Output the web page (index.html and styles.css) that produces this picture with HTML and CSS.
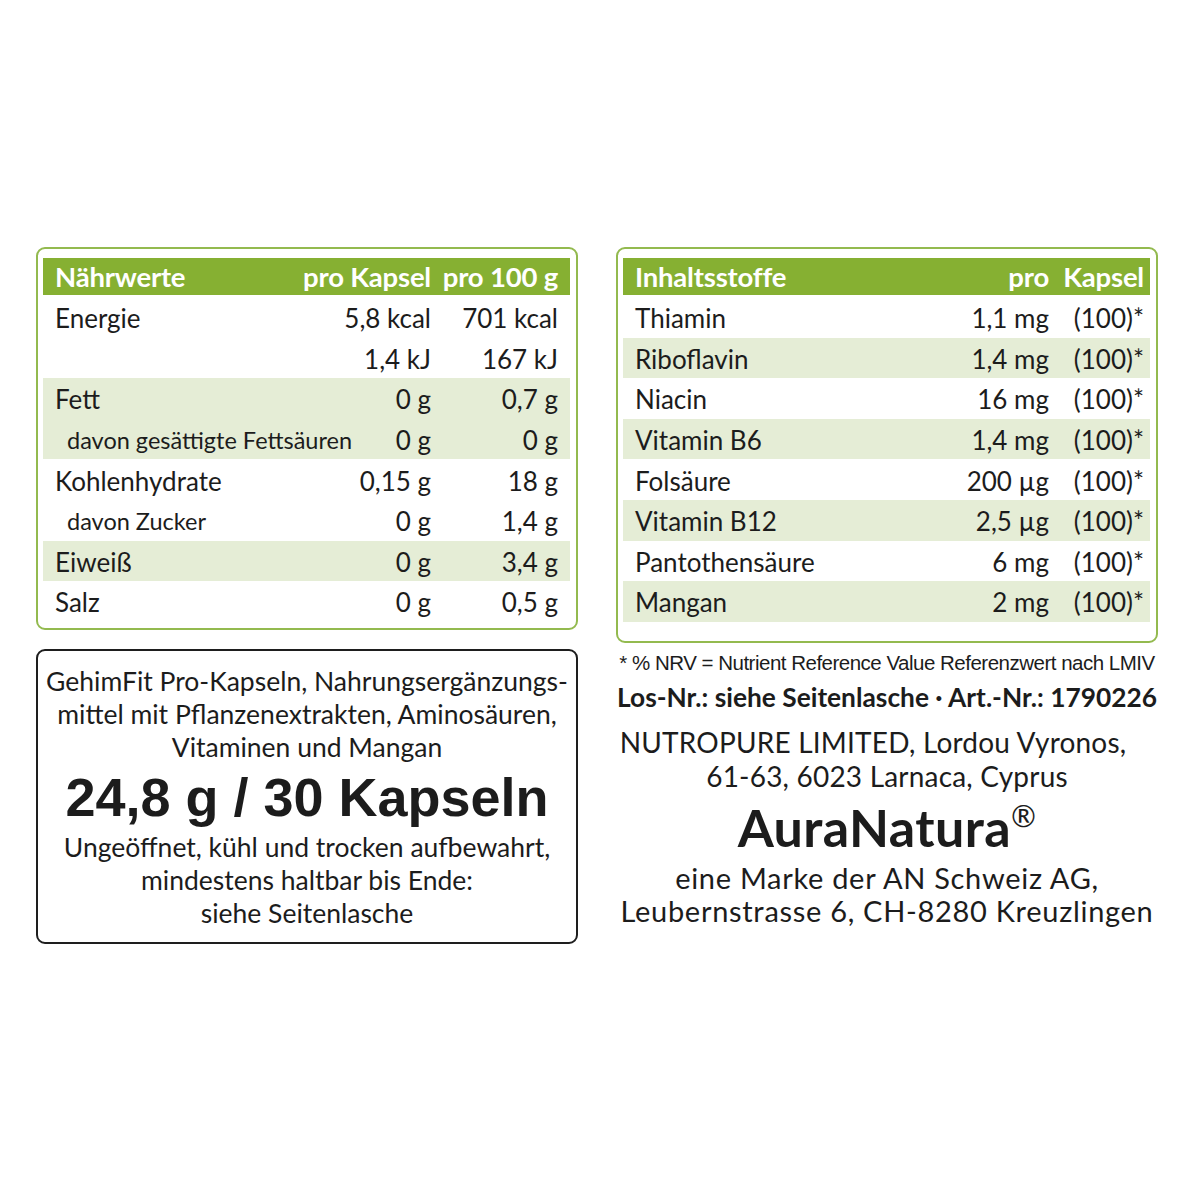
FILE: index.html
```html
<!DOCTYPE html>
<html lang="de">
<head>
<meta charset="utf-8">
<title>Nährwerte</title>
<link rel="stylesheet" href="styles.css">
</head>
<body>
<div class="page">
  <div class="col col-left">
    <div class="gbox nutri">
      <div class="row head">
        <span class="c1">Nährwerte</span><span class="c2">pro Kapsel</span><span class="c3">pro 100 g</span>
      </div>
      <div class="row"><span class="c1">Energie</span><span class="c2">5,8 kcal</span><span class="c3">701 kcal</span></div>
      <div class="row"><span class="c1"></span><span class="c2">1,4 kJ</span><span class="c3">167 kJ</span></div>
      <div class="row shade"><span class="c1">Fett</span><span class="c2">0 g</span><span class="c3">0,7 g</span></div>
      <div class="row shade"><span class="c1 sub">davon gesättigte Fettsäuren</span><span class="c2">0 g</span><span class="c3">0 g</span></div>
      <div class="row"><span class="c1">Kohlenhydrate</span><span class="c2">0,15 g</span><span class="c3">18 g</span></div>
      <div class="row"><span class="c1 sub">davon Zucker</span><span class="c2">0 g</span><span class="c3">1,4 g</span></div>
      <div class="row shade"><span class="c1">Eiweiß</span><span class="c2">0 g</span><span class="c3">3,4 g</span></div>
      <div class="row"><span class="c1">Salz</span><span class="c2">0 g</span><span class="c3">0,5 g</span></div>
    </div>
    <div class="bbox">
      <p class="desc">GehimFit Pro-Kapseln, Nahrungsergänzungs-<br>mittel mit Pflanzenextrakten, Aminosäuren,<br>Vitaminen und Mangan</p>
      <p class="weight">24,8 g / 30 Kapseln</p>
      <p class="desc">Ungeöffnet, kühl und trocken aufbewahrt,<br>mindestens haltbar bis Ende:<br>siehe Seitenlasche</p>
    </div>
  </div>
  <div class="col col-right">
    <div class="gbox ingr">
      <div class="row head">
        <span class="c1">Inhaltsstoffe</span><span class="c2">pro</span><span class="c3">Kapsel</span>
      </div>
      <div class="row"><span class="c1">Thiamin</span><span class="c2">1,1 mg</span><span class="c3">(100)*</span></div>
      <div class="row shade"><span class="c1">Riboflavin</span><span class="c2">1,4 mg</span><span class="c3">(100)*</span></div>
      <div class="row"><span class="c1">Niacin</span><span class="c2">16 mg</span><span class="c3">(100)*</span></div>
      <div class="row shade"><span class="c1">Vitamin B6</span><span class="c2">1,4 mg</span><span class="c3">(100)*</span></div>
      <div class="row"><span class="c1">Folsäure</span><span class="c2">200 µg</span><span class="c3">(100)*</span></div>
      <div class="row shade"><span class="c1">Vitamin B12</span><span class="c2">2,5 µg</span><span class="c3">(100)*</span></div>
      <div class="row"><span class="c1">Pantothensäure</span><span class="c2">6 mg</span><span class="c3">(100)*</span></div>
      <div class="row shade"><span class="c1">Mangan</span><span class="c2">2 mg</span><span class="c3">(100)*</span></div>
    </div>
    <p class="nrv">* % NRV = Nutrient Reference Value Referenzwert nach LMIV</p>
    <p class="los">Los-Nr.: siehe Seitenlasche · Art.-Nr.: 1790226</p>
    <p class="addr"><span class="trail">NUTROPURE LIMITED, Lordou Vyronos,</span><br>61-63, 6023 Larnaca, Cyprus</p>
    <p class="brand">AuraNatura<sup>®</sup></p>
    <p class="addr addr2">eine Marke der AN Schweiz AG,<br>Leubernstrasse 6, CH-8280 Kreuzlingen</p>
  </div>
</div>
</body>
</html>
```
FILE: styles.css
```css
html, body {
  margin: 0;
  padding: 0;
  background: #ffffff;
}
body {
  font-family: "Lato", "Liberation Sans", sans-serif;
  color: #1c1c1c;
}
.page {
  display: flex;
  gap: 38px;
  padding: 247px 0 0 36px;
}
.col {
  width: 542px;
  display: flex;
  flex-direction: column;
}
.gbox {
  border: 2px solid #93ba4f;
  border-radius: 9px;
  padding: 9px 6px 6px 5px;
}
.ingr {
  padding-bottom: 19px;
}
.row {
  display: grid;
  align-items: center;
  height: 40.6px;
  font-size: 26px;
  padding-top: 2px !important;
  box-sizing: border-box;
}
.nutri .row {
  grid-template-columns: minmax(0, 1fr) 140px 127px;
  padding: 0 12px 0 12px;
}
.ingr .row {
  grid-template-columns: minmax(0, 1fr) 150px 95px;
  padding: 0 6px 0 12px;
}
.row .c2, .row .c3 {
  text-align: right;
  white-space: nowrap;
}
.row .c1 { white-space: nowrap; }
.row .sub {
  font-size: 23.5px;
  padding-left: 12px;
}
.row.head {
  background: #86b032;
  color: #ffffff;
  font-weight: 700;
  height: 37px;
  font-size: 27.5px;
  letter-spacing: -0.2px;
  margin-bottom: 2px;
  padding-top: 0 !important;
}
.row.shade {
  background: #e5edd6;
}
.bbox {
  margin-top: 19px;
  border: 2px solid #1e1e1e;
  border-radius: 9px;
  height: 295px;
  box-sizing: border-box;
  text-align: center;
  padding-top: 14px;
}
.bbox p { margin: 0; }
.desc {
  font-size: 26.5px;
  line-height: 33px;
}
.weight {
  font-family: "Liberation Sans", Arial, sans-serif;
  font-weight: 700;
  font-size: 54px;
  line-height: 67px;
}
.col-right p { margin: 0; text-align: center; white-space: nowrap; }
.nrv {
  font-family: "Liberation Sans", Arial, sans-serif;
  font-size: 20.5px;
  letter-spacing: -0.5px;
  margin-top: 8px !important;
  line-height: 24px;
}
.los {
  font-weight: 700;
  font-size: 26.3px;
  line-height: 32px;
  margin-top: 6px !important;
}
.addr {
  font-size: 28px;
  line-height: 34px;
  margin-top: 12px !important;
  letter-spacing: 0.2px;
}
.trail {
  padding-right: 28px;
}
.brand {
  font-weight: 700;
  font-size: 52px;
  line-height: 56px;
  letter-spacing: 0.4px;
  margin-top: 6px !important;
}
.brand sup {
  font-size: 30px;
  font-weight: 400;
  vertical-align: 20px;
  line-height: 0;
}
.addr2 {
  font-size: 29px;
  letter-spacing: 0.7px;
  line-height: 33px;
  margin-top: 6px !important;
}
```
